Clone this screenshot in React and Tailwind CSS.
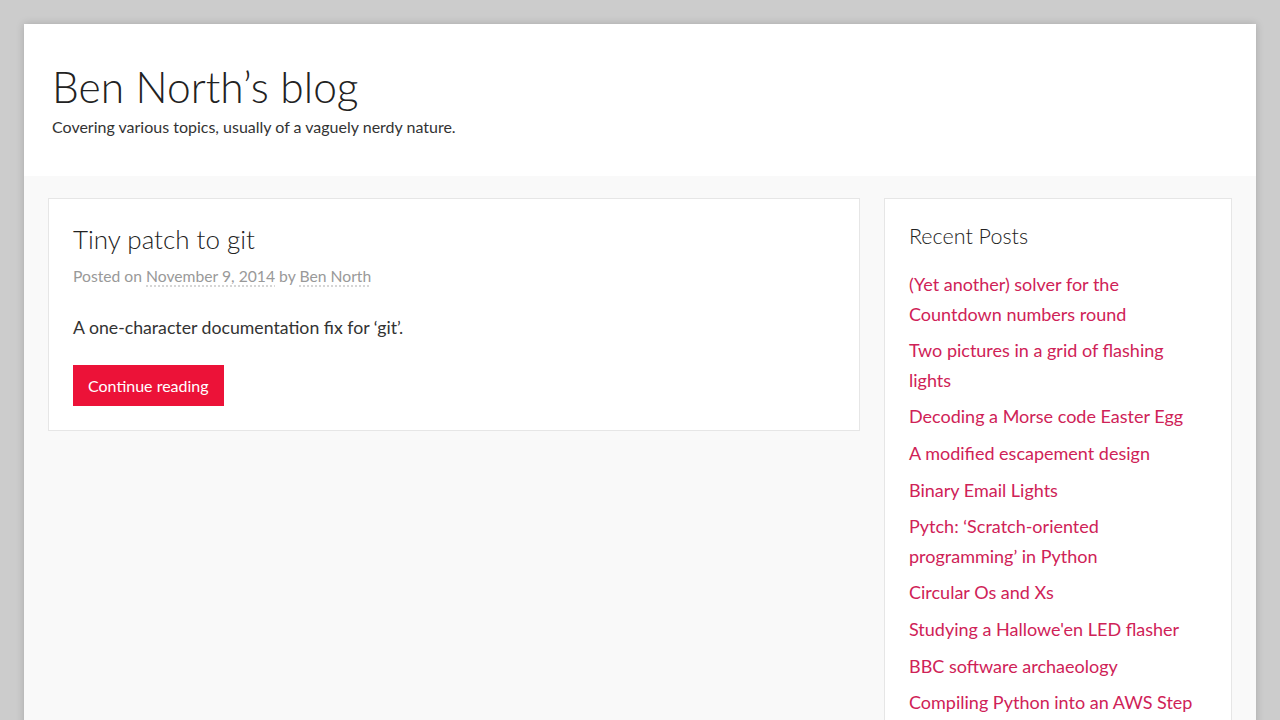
const POSTS = [
  '(Yet another) solver for the Countdown numbers round',
  'Two pictures in a grid of flashing lights',
  'Decoding a Morse code Easter Egg',
  'A modified escapement design',
  'Binary Email Lights',
  "Pytch: ‘Scratch-oriented programming’ in Python",
  'Circular Os and Xs',
  "Studying a Hallowe'en LED flasher",
  'BBC software archaeology',
  'Compiling Python into an AWS Step Functions state machine',
];

const font = { fontFamily: 'Lato, "Open Sans", sans-serif' };

export default function App() {
  return (
    <div className="min-h-screen bg-[#cccccc] px-6 pt-6" style={font}>
      <div className="mx-auto w-[1232px] overflow-hidden bg-[#f9f9f9] shadow-[0_0_8px_rgba(0,0,0,0.18)]">
        <header className="h-[152px] bg-white pl-7 pt-[40px]">
          <h1 className="text-[42.5px] font-light leading-[46px] text-[#222222]">Ben North’s blog</h1>
          <p className="mt-[6px] text-[16px] leading-[22px] text-[#333333]">
            Covering various topics, usually of a vaguely nerdy nature.
          </p>
        </header>

        <div className="flex items-start gap-6 px-6 pt-[22px]">
          <main className="w-[812px]">
            <article className="border border-[#e6e6e6] bg-white px-6 pb-6 pt-[22px]">
              <h2 className="text-[26px] font-light leading-[36px] text-[#222222]">Tiny patch to git</h2>
              <p className="mt-[8px] text-[15.7px] leading-[22px] text-[#999999]">
                Posted on{' '}
                <span className="underline decoration-dotted decoration-[#cccccc] underline-offset-4">November 9, 2014</span>{' '}
                by{' '}
                <span className="underline decoration-dotted decoration-[#cccccc] underline-offset-4">Ben North</span>
              </p>
              <p className="mt-[29px] text-[17.7px] leading-[24px] text-[#333333]">
                A one-character documentation fix for ‘git’.
              </p>
              <button
                type="button"
                className="mt-[25px] h-[41px] bg-[#ec1238] px-[15px] text-[16px] text-white"
              >
                Continue reading
              </button>
            </article>
            <div className="ml-[6px] mt-[6px] h-[300px]" />
          </main>

          <aside className="w-[348px] border border-[#e6e6e6] bg-white px-6 pt-[22px] pb-6">
            <h3 className="text-[21.5px] font-light leading-[30px] text-[#222222]">Recent Posts</h3>
            <ul className="mt-[19px] flex flex-col gap-[7px]">
              {POSTS.map((post) => (
                <li key={post} className="text-[18px] leading-[29.6px] text-[#cf2257]">
                  {post}
                </li>
              ))}
            </ul>
          </aside>
        </div>
      </div>
    </div>
  );
}
